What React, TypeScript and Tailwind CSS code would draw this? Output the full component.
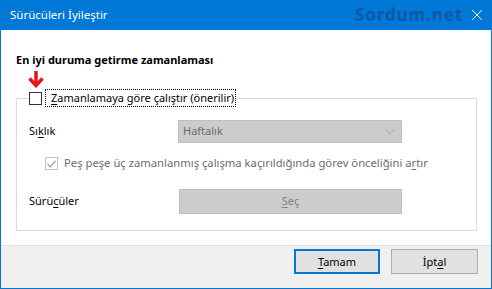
const font = "font-['Noto_Sans','Open_Sans',sans-serif]";

const DownArrow = () => (
  <svg width="16" height="17" viewBox="0 0 16 17" className="absolute left-[27px] top-[41px]">
    <path d="M8 0 V14" stroke="#e8141b" strokeWidth="3.5" fill="none" />
    <path d="M1.5 7.5 L8 14.5 L14.5 7.5" stroke="#e8141b" strokeWidth="3.5" fill="none" strokeLinejoin="miter" />
  </svg>
);

const Chevron = () => (
  <svg width="10" height="6" viewBox="0 0 10 6" className="mr-[6px]">
    <path d="M0.5 0.5 L5 5 L9.5 0.5" stroke="#a6a6a6" strokeWidth="1" fill="none" />
  </svg>
);

const U = ({ children }: { children: string }) => <span className="underline underline-offset-2">{children}</span>;

export default function App() {
  return (
    <div className={`w-[492px] h-[289px] flex flex-col border border-t-0 border-[#0078d7] bg-white text-[11px] text-black ${font}`}>
      {/* title bar */}
      <div className="h-[30px] shrink-0 bg-[#0078d7] flex items-center pl-[9px] pr-[9px] text-white text-[11.5px]">
        <span className="flex-1">Sürücüleri İyileştir</span>
        <span className="font-bold text-[17px] text-[#0b5aa6] mr-[9px] tracking-[0.9px]">Sordum.net</span>
        <svg width="10" height="10" viewBox="0 0 10 10">
          <path d="M0 0 L10 10 M10 0 L0 10" stroke="#fff" strokeWidth="1" />
        </svg>
      </div>

      {/* body */}
      <div className="relative flex-1 pt-[22px] pl-[15px] pr-[14px]">
        <DownArrow />
        <div className="font-bold h-[16px] leading-[16px]">En iyi duruma getirme zamanlaması</div>

        <fieldset className="mt-[21px] border border-[#dcdcdc] px-[12px] pb-[16px]">
          <legend className="flex items-center h-[18px]">
            <span className="w-[13px] h-[13px] border border-[#333] bg-white" />
            <span className="ml-[3px] h-[18px] leading-[16px] border border-dotted border-black pl-[5px] pr-[1px]">
              <U>Z</U>amanlamaya göre çalıştır (önerilir)
            </span>
          </legend>

          <div className="mt-[13px] flex items-center h-[23px]">
            <span className="w-[149px]">
              Sı<U>k</U>lık
            </span>
            <div className="w-[224px] h-[23px] bg-[#cccccc] border border-[#bfbfbf] flex items-center justify-between pl-[4px] text-[#6d6d6d]">
              <span>Haftalık</span>
              <Chevron />
            </div>
          </div>

          <div className="mt-[14px] flex items-center pl-[16px] h-[13px] text-[#6d6d6d]">
            <span className="w-[13px] h-[13px] border border-[#c4c4c4] bg-white flex items-center justify-center">
              <svg width="9" height="8" viewBox="0 0 9 8">
                <path d="M0.5 4 L3.3 6.8 L8.5 0.8" stroke="#9a9a9a" strokeWidth="1.2" fill="none" />
              </svg>
            </span>
            <span className="ml-[6px] text-[11.25px]">
              Peş peşe üç zamanlanmış çalışma kaçırıldığında görev önceliğini a<U>r</U>tır
            </span>
          </div>

          <div className="mt-[19px] flex items-center h-[25px]">
            <span className="w-[150px]">
              Sürü<U>c</U>üler
            </span>
            <div className="w-[223px] h-[25px] bg-[#cccccc] border border-[#bfbfbf] flex items-center justify-center text-[#838383]">
              <span>
                <U>S</U>eç
              </span>
            </div>
          </div>
        </fieldset>
      </div>

      {/* footer */}
      <div className="h-[43px] shrink-0 border-t border-[#dfdfdf] bg-[#f0f0f0] flex justify-end items-start pt-[3px] pr-[13px] gap-[11px]">
        <button className="w-[86px] h-[25px] bg-[#e1e1e1] border-2 border-[#0078d7] leading-none">
          <U>T</U>amam
        </button>
        <button className="w-[87px] h-[25px] bg-[#e1e1e1] border border-[#adadad] leading-none">
          İpt<U>a</U>l
        </button>
      </div>
    </div>
  );
}
